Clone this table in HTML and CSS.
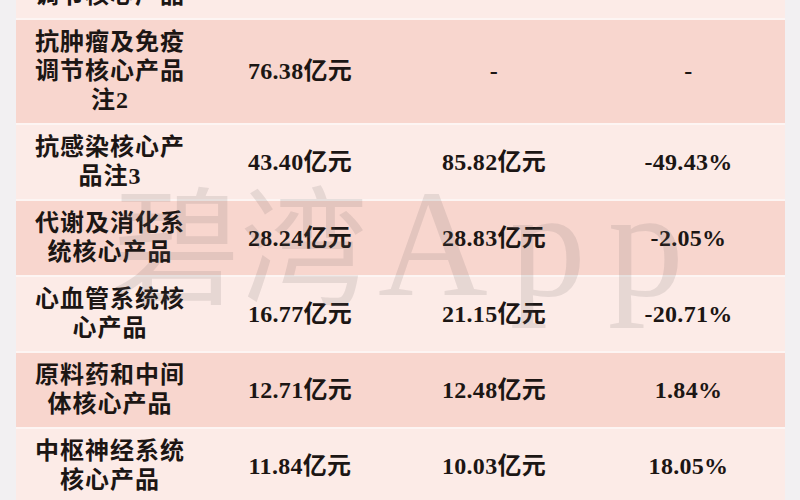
FILE: index.html
```html
<!DOCTYPE html>
<html lang="zh">
<head>
<meta charset="utf-8">
<title>核心产品收入</title>
<link rel="stylesheet" href="styles.css">
</head>
<body>
<div class="sheet">
  <div class="row light">
    <div class="cell name">抗肿瘤及免疫<br>调节核心产品</div>
    <div class="cell num">76.38亿元</div>
    <div class="cell num">-</div>
    <div class="cell num">-</div>
  </div>
  <div class="row dark">
    <div class="cell name">抗肿瘤及免疫<br>调节核心产品<br>注2</div>
    <div class="cell num">76.38亿元</div>
    <div class="cell num dash">-</div>
    <div class="cell num dash">-</div>
  </div>
  <div class="row light">
    <div class="cell name">抗感染核心产<br>品注3</div>
    <div class="cell num">43.40亿元</div>
    <div class="cell num">85.82亿元</div>
    <div class="cell num">-49.43%</div>
  </div>
  <div class="row dark">
    <div class="cell name">代谢及消化系<br>统核心产品</div>
    <div class="cell num">28.24亿元</div>
    <div class="cell num">28.83亿元</div>
    <div class="cell num">-2.05%</div>
  </div>
  <div class="row light">
    <div class="cell name">心血管系统核<br>心产品</div>
    <div class="cell num">16.77亿元</div>
    <div class="cell num">21.15亿元</div>
    <div class="cell num">-20.71%</div>
  </div>
  <div class="row dark">
    <div class="cell name">原料药和中间<br>体核心产品</div>
    <div class="cell num">12.71亿元</div>
    <div class="cell num">12.48亿元</div>
    <div class="cell num">1.84%</div>
  </div>
  <div class="row light">
    <div class="cell name">中枢神经系统<br>核心产品</div>
    <div class="cell num">11.84亿元</div>
    <div class="cell num">10.03亿元</div>
    <div class="cell num">18.05%</div>
  </div>
</div>
<div class="watermark"><span class="wm-cn">碧湾</span><span class="wm-en">App</span></div>
</body>
</html>
```

FILE: styles.css
```css
html, body {
  margin: 0;
  padding: 0;
}
body {
  position: relative;
  width: 800px;
  height: 500px;
  overflow: hidden;
  background: #f2f0f2;
  font-family: "Liberation Serif", "Noto Sans CJK SC", serif;
  color: #1c1614;
}
.sheet {
  margin: -56px 15px 0 16px;
  background: #fdf5f3;
  display: flex;
  flex-direction: column;
  gap: 2px;
}
.row {
  display: grid;
  grid-template-columns: 188px 192px 196px 1fr;
  align-items: center;
  padding: 8px 0;
}
.row.light { background: #fcebe7; }
.row.dark { background: #f8d6ce; }
.cell {
  text-align: center;
  font-weight: 700;
}
.name {
  font-size: 24px;
  line-height: 29px;
  letter-spacing: 1px;
}
.num {
  font-size: 24px;
  line-height: 29px;
  letter-spacing: 0.3px;
}
.watermark {
  position: absolute;
  left: 112px;
  top: 168px;
  line-height: 1;
  white-space: nowrap;
  color: rgba(110, 100, 100, 0.15);
  pointer-events: none;
}
.wm-cn {
  font-family: "Noto Sans CJK SC", sans-serif;
  font-size: 128px;
  font-weight: 400;
}
.wm-en {
  font-family: "Liberation Serif", serif;
  font-size: 152px;
  letter-spacing: 22px;
  margin-left: 10px;
}
```
